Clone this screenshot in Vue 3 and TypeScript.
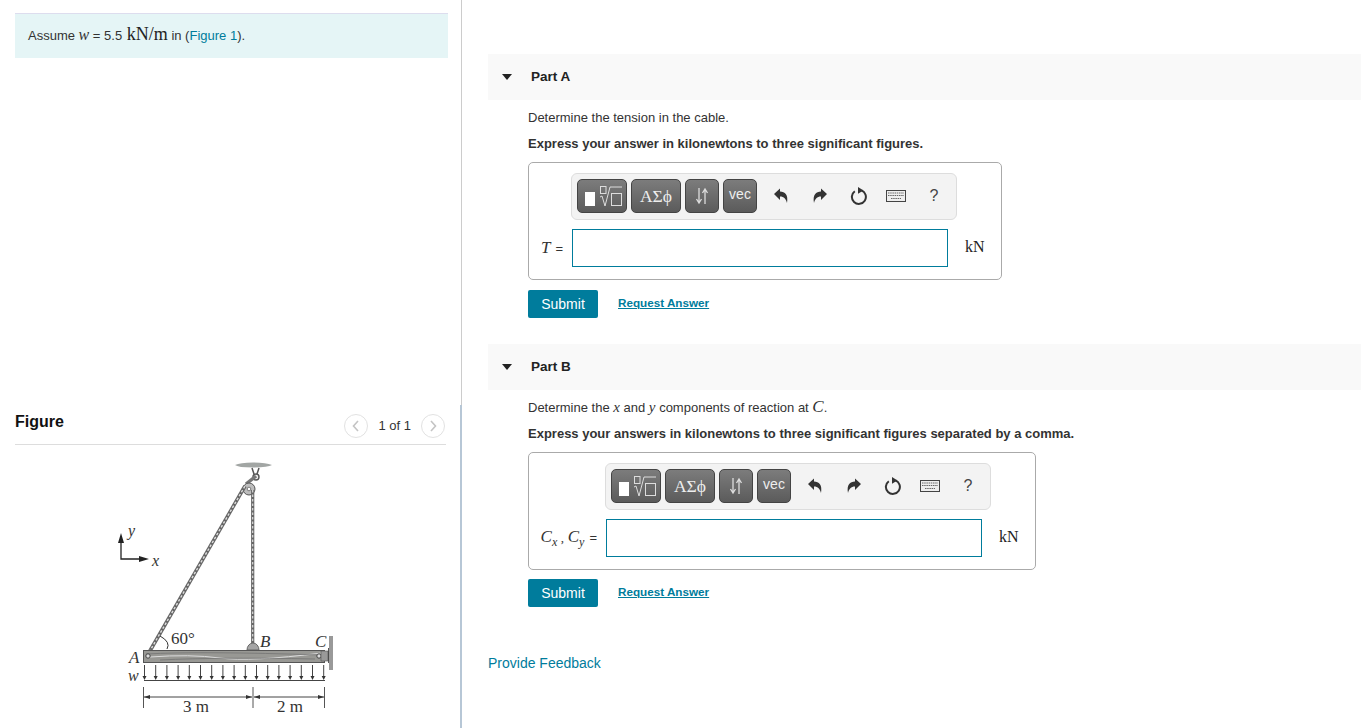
<script setup lang="ts">
interface Part {
  title: string
  answer: string
  kind: 'single' | 'pair'
}
const parts: Part[] = [
  { title: 'Part A', answer: 'Express your answer in kilonewtons to three significant figures.', kind: 'single' },
  { title: 'Part B', answer: 'Express your answers in kilonewtons to three significant figures separated by a comma.', kind: 'pair' },
]
const loads: number[] = Array.from({ length: 17 }, (_, i) => 44.5 + i * 11.2)
</script>

<template>
  <div class="page">
    <aside class="left">
      <section class="intro">
        <p class="note">
          Assume <i class="m mw">w</i> = 5.5 <span class="m big">kN/m</span> in (<a class="link">Figure 1</a>).
        </p>
      </section>
      <section class="figure">
        <header class="fig-head">
          <h2>Figure</h2>
          <div class="pager">
            <span class="circle"><svg width="10" height="12" viewBox="0 0 10 12"><path d="M7 1 2.5 6 7 11" fill="none" stroke="#c4c4c4" stroke-width="1.6" /></svg></span>
            <span class="count">1 of 1</span>
            <span class="circle"><svg width="10" height="12" viewBox="0 0 10 12"><path d="M3 1 7.500 6 3 11" fill="none" stroke="#c4c4c4" stroke-width="1.6" /></svg></span>
          </div>
        </header>
        <svg class="diagram" width="250" height="278" viewBox="0 0 250 278">
          <path d="M135 15Q140 12.500 153 12.500T172 15Q168 17.500 153 17.500T135 15Z" fill="#a2a6a4" />
          <path d="M152 18 154 24M159 18 157 24" stroke="#555" stroke-width="1.500" />
          <circle cx="156" cy="27" r="3" fill="#eee" stroke="#555" stroke-width="1.400" />
          <path d="M146 34 156 26" stroke="#777" stroke-width="3.500" />
          <circle cx="149" cy="39" r="6" fill="#bdbdbd" stroke="#555" />
          <circle cx="149" cy="39" r="1.800" fill="#fff" stroke="#555" stroke-width=".7" />
          <path d="M47 206 145 36" stroke="#666" stroke-width="3.600" />
          <path d="M47 206 145 36" stroke="#ddd" stroke-width="1.400" stroke-dasharray="2.500 2" />
          <path d="M152.700 40V197" stroke="#666" stroke-width="3.200" />
          <path d="M152.700 40V197" stroke="#ddd" stroke-width="1.200" stroke-dasharray="2.500 2" />

          <path d="M21 90V109H42" fill="none" stroke="#222" stroke-width="1.300" />
          <path d="M21 83 18 93H24ZM49 109 39 106V112Z" fill="#222" />
          <text class="fig-i" x="28" y="86">y</text>
          <text class="fig-i" x="52" y="116">x</text>

          <path d="M60 186Q71 192 67 199" fill="none" stroke="#333" />
          <text class="fig lg" x="71" y="194">60°</text>
          <path d="M147 200a6 7 0 0 1 12 0Z" fill="#a5a5a5" stroke="#666" />
          <text class="fig-i lg" x="160" y="197">B</text>
          <text class="fig-i lg" x="215" y="197">C</text>
          <text class="fig-i lg" x="29" y="213">A</text>

          <rect x="43.500" y="200.500" width="181" height="12" fill="#989894" stroke="#555" />
          <path d="M50 207Q90 204 120 208T222 203" fill="none" stroke="#ddd" />
          <path d="M46 204Q100 201 222 205M60 210Q120 207 215 209" fill="none" stroke="#6f6f6f" stroke-width=".7" />
          <circle cx="48" cy="206" r="2.200" fill="#ddd" stroke="#444" />
          <circle cx="219" cy="206" r="2.200" fill="#ddd" stroke="#444" />
          <path d="M221 201H228V211H221Z" fill="#999" stroke="#555" stroke-width=".6" />
          <path d="M229 198V213" stroke="#222" stroke-width="1.500" />
          <path d="M231 186V220" stroke="#999" stroke-width="4" />

          <text class="fig-i" x="28" y="231">w</text>
          <path d="M44 230.500H225" stroke="#444" />
          <g v-for="x in loads" :key="x">
            <path :d="`M${x} 215V227`" stroke="#444" />
            <path :d="`M${x} 230l-2-4h4Z`" fill="#333" />
          </g>
          <path d="M43.500 237V258M153 237V258M224.500 237V258" stroke="#555" />
          <path d="M44 247H152M154 247H224" stroke="#444" />
          <path d="M44 247l6-2v4ZM152 247l-6-2v4ZM154 247l6-2v4ZM224 247l-6-2v4Z" fill="#333" />
          <text class="fig lg" x="83" y="262">3 m</text>
          <text class="fig lg" x="177" y="262">2 m</text>
        </svg>
      </section>
    </aside>

    <main class="right">
      <section v-for="part in parts" :key="part.title" class="part">
        <div class="part-bar">
          <span class="tri"></span>
          <h3>{{ part.title }}</h3>
        </div>
        <div class="part-body">
          <p v-if="part.kind === 'single'" class="q">Determine the tension in the cable.</p>
          <p v-else class="q">Determine the <i class="m">x</i> and <i class="m">y</i> components of reaction at <i class="m c">C</i>.</p>
          <p class="express">{{ part.answer }}</p>
          <div class="answer" :class="part.kind">
            <div class="toolbar">
              <span class="btn b1">
                <svg width="48" height="32" viewBox="0 0 48 32">
                  <rect x="7" y="12" width="10" height="14" fill="#fff" />
                  <rect x="22.500" y="6.500" width="5.500" height="7" fill="none" stroke="#ddd" />
                  <path d="M22 17l2-1 3 10 5-19h12" fill="none" stroke="#ddd" />
                  <rect x="33.500" y="13.500" width="10" height="12" fill="none" stroke="#ddd" />
                </svg>
              </span>
              <span class="btn b1 greek">ΑΣϕ</span>
              <span class="btn b2">
                <svg width="16" height="18" viewBox="0 0 16 18">
                  <path d="M5 1V15M2.500 12 5 16 7.500 12M11 17V3M8.500 6 11 2 13.500 6" fill="none" stroke="#ddd" stroke-width="1.300" />
                </svg>
              </span>
              <span class="btn b2 vec">vec</span>
              <span class="tool t1">
                <svg width="16" height="16" viewBox="0 0 16 16"><path d="M1 6 7 .5V3.500C12 3.500 15.500 7 14 15 13 11 11 8.500 7 8.500V12Z" fill="#333" /></svg>
              </span>
              <span class="tool t2">
                <svg width="16" height="16" viewBox="0 0 16 16"><path d="M15 6 9 .5V3.500C4 3.500 .5 7 2 15 3 11 5 8.500 9 8.500V12Z" fill="#333" /></svg>
              </span>
              <span class="tool t3">
                <svg width="18" height="18" viewBox="0 0 18 18"><path d="M11.500 3.400A7 7 0 1 1 4.800 4.200" fill="none" stroke="#333" stroke-width="2" /><path d="M8 0 13.500 3.500 8 6.800Z" fill="#333" /></svg>
              </span>
              <span class="tool t4">
                <svg width="20" height="12" viewBox="0 0 20 12"><rect x=".5" y=".5" width="19" height="11" fill="#eee" stroke="#444" /><path d="M2 3h16M2 5.500h16M5 8.500h10" stroke="#666" stroke-width="1.200" stroke-dasharray="1.500 .7" /></svg>
              </span>
              <span class="tool help">?</span>
            </div>
            <div class="row">
              <span v-if="part.kind === 'single'" class="label"><i class="m">T</i><span class="eq">=</span></span>
              <span v-else class="label"><i class="m">C<sub>x</sub></i> <span class="comma">,</span> <i class="m">C<sub>y</sub></i><span class="eq">=</span></span>
              <span class="input"></span>
              <span class="unit m">kN</span>
            </div>
          </div>
          <div class="actions">
            <button type="button" class="submit">Submit</button>
            <a class="request">Request Answer</a>
          </div>
        </div>
      </section>
      <a class="feedback">Provide Feedback</a>
    </main>
  </div>
</template>

<style>
html, body { margin: 0; overflow: hidden; background: #fff; }
</style>

<style scoped>
.page {
  display: flex;
  width: 1361px;
  height: 728px;
  overflow: hidden;
  font-family: "Liberation Sans", Arial, sans-serif;
  font-size: 13px;
  color: #333;
}
.left { width: 462px; flex: none; display: flex; flex-direction: column; }
.intro {
  height: 405px;
  box-sizing: border-box;
  padding: 13px 13px 0 15px;
  border-right: 1px solid #ccc;
}
.note {
  margin: 0;
  height: 45px;
  box-sizing: border-box;
  padding: 12px 13px 0;
  line-height: 20px;
  background: #e5f5f6;
  border-top: 1px solid #dde;
  font-size: 13px;
}
.m { font-family: "Liberation Serif", "DejaVu Serif", serif; line-height: 0; }
.mw { font-size: 16px; }
.big { font-size: 18px; color: #222; margin-left: 1px; }
.link { color: #007c9c; }
.figure {
  flex: 1;
  min-height: 0;
  padding: 0 14px 0 15px;
  border-right: 2px solid #b7c7d6;
  overflow: hidden;
}
.fig-head {
  height: 40px;
  box-sizing: border-box;
  border-bottom: 1px solid #ddd;
  display: flex;
  justify-content: space-between;
  align-items: center;
}
.fig-head h2 { margin: -6px 0 0; font-size: 16px; font-weight: bold; color: #111; }
.pager { display: flex; align-items: center; gap: 10px; margin: 2px 1px 0 0; }
.circle {
  width: 24px;
  height: 24px;
  box-sizing: border-box;
  border: 1px solid #e2e2e2;
  border-radius: 50%;
  display: flex;
  align-items: center;
  justify-content: center;
}
.count { font-size: 13px; }
.diagram { display: block; margin: 5px 0 0 85px; }
.fig { font: 16px "Liberation Serif", serif; fill: #333; }
.fig-i { font: italic 16px "Liberation Serif", serif; fill: #333; }
.lg { font-size: 17px; }

.right { flex: 1; min-width: 0; padding: 54px 0 0 26px; }
.part { height: 290px; }
.part-bar {
  height: 46px;
  background: #f9f9f9;
  display: flex;
  align-items: center;
}
.tri {
  margin-left: 14px;
  border-left: 5px solid transparent;
  border-right: 5px solid transparent;
  border-top: 6px solid #222;
}
.part-bar h3 { margin: -1px 0 0 19px; font-size: 13.500px; font-weight: bold; color: #222; }
.part-body { padding: 0 0 0 40px; }
.q { margin: 0; padding-top: 9px; line-height: 18px; font-size: 13px; }
.q .m { font-size: 15px; }
.q .c { font-size: 17px; }
.express { margin: 8px 0 0; line-height: 18px; font-size: 13px; font-weight: bold; }
.answer {
  margin-top: 9px;
  width: 474px;
  height: 118px;
  box-sizing: border-box;
  border: 1px solid #aaa;
  border-radius: 5px;
  padding: 10px 0 0 43px;
}
.answer.pair { width: 508px; padding-left: 77px; }
.toolbar {
  width: 386px;
  height: 47px;
  box-sizing: border-box;
  margin-left: -1px;
  padding: 5px 0 0 5px;
  background: #f3f3f3;
  border: 1px solid #ddd;
  border-radius: 6px;
  display: flex;
  gap: 4px;
}
.btn {
  height: 34px;
  box-sizing: border-box;
  border: 1px solid #444;
  border-radius: 5px;
  background: linear-gradient(#7c7c7c, #5b5b5b);
  color: #eee;
  display: flex;
  align-items: center;
  justify-content: center;
}
.b1 { width: 50px; }
.b2 { width: 34px; }
.greek { font: 17.500px "Liberation Serif", serif; }
.vec { font-size: 14px; padding-bottom: 4px; }
.tool {
  height: 34px;
  display: flex;
  align-items: center;
  justify-content: center;
  width: 20px;
  flex: none;
}
.t1 { margin-left: 10px; }
.t2 { margin-left: 15px; }
.t3 { margin-left: 15px; }
.t4 { margin-left: 13px; }
.help { margin-left: 14px; font-size: 16px; color: #444; }
.row { display: flex; align-items: center; margin-top: 9px; position: relative; }
.label {
  position: absolute;
  right: 100%;
  margin-right: 9px;
  text-align: right;
  white-space: nowrap;
  font-size: 13px;
}
.label .m { font-size: 17px; }
.label sub { font-size: 12px; line-height: 0; }
.comma { font-family: "Liberation Serif", serif; }
.eq { margin-left: 5px; }
.input {
  width: 376px;
  height: 38px;
  box-sizing: border-box;
  border: 1px solid #007c9c;
  background: #fff;
}
.unit { margin-left: 17px; font-size: 16px; color: #222; margin-top: -3px; }
.actions { display: flex; align-items: center; margin-top: 10px; gap: 20px; }
.pair + .actions { margin-top: 9px; }
.submit {
  width: 70px;
  height: 28px;
  border: none;
  border-radius: 2px;
  padding: 0;
  background: #007c9c;
  color: #fff;
  font: 14px "Liberation Sans", Arial, sans-serif;
}
.request {
  margin-top: -3px;
  font-size: 11.700px;
  font-weight: bold;
  color: #007c9c;
  text-decoration: underline;
}
.feedback { display: block; margin-top: 21px; font-size: 14px; color: #007c9c; }
</style>
